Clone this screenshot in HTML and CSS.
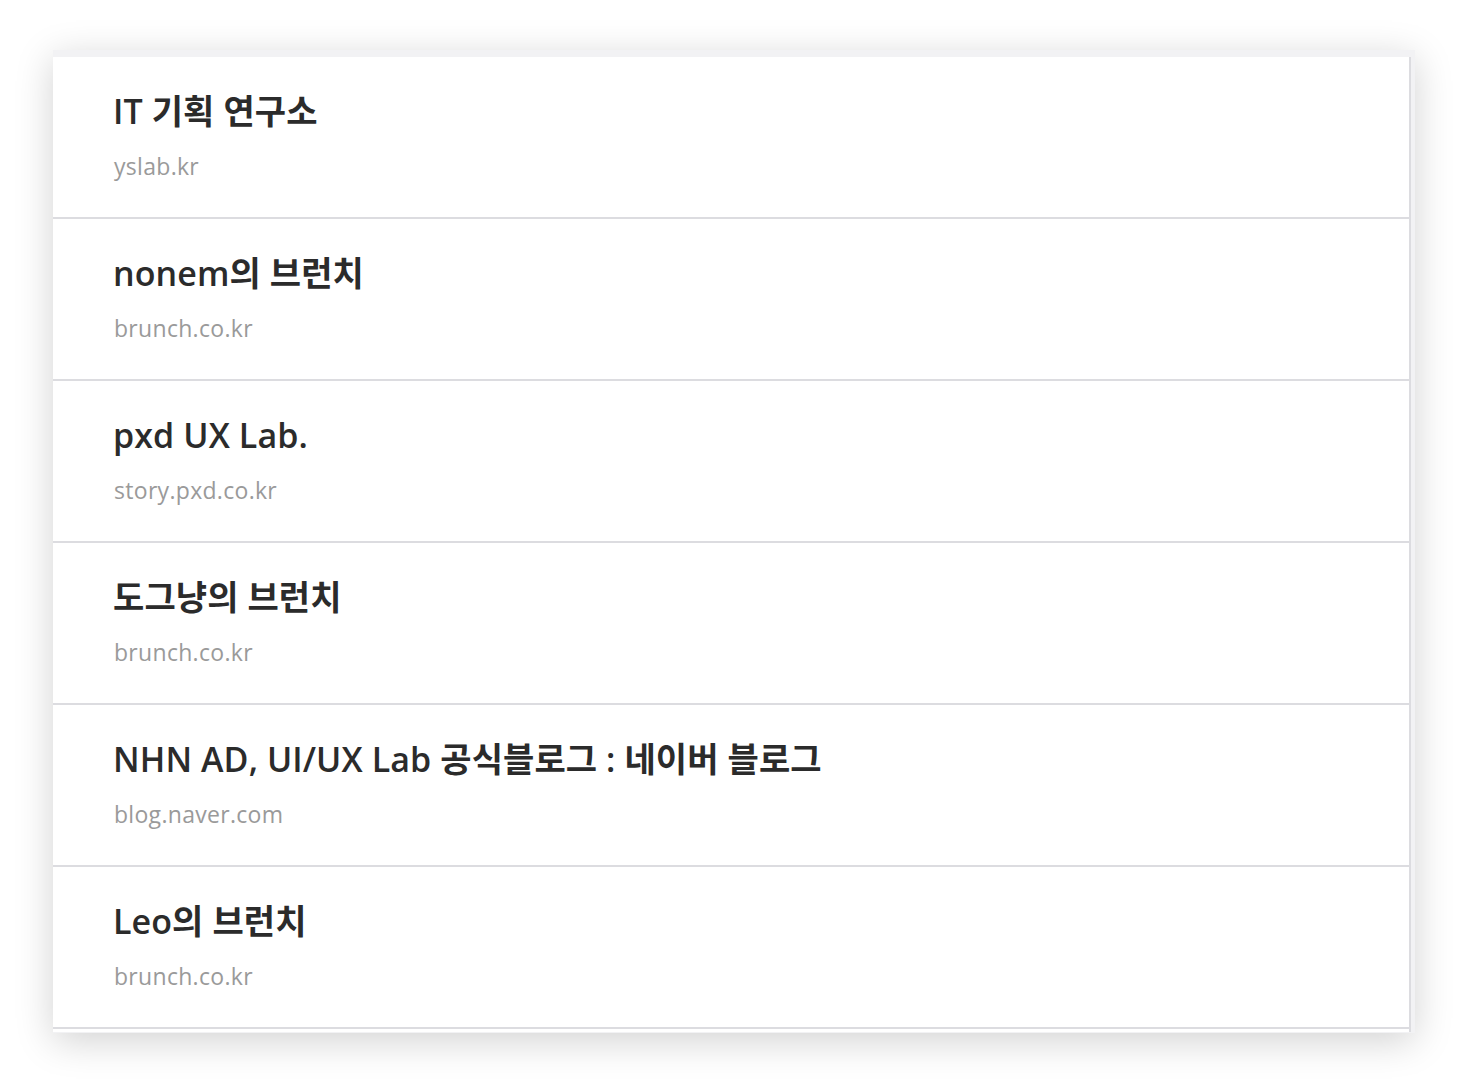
FILE: index.html
```html
<!DOCTYPE html>
<html lang="ko">
<head>
<meta charset="utf-8">
<link rel="stylesheet" href="styles.css">
</head>
<body>
<div class="panel">
  <ul class="list">
    <li class="item"><div class="title">IT 기획 연구소</div><div class="site">yslab.kr</div></li>
    <li class="item"><div class="title">nonem의 브런치</div><div class="site">brunch.co.kr</div></li>
    <li class="item"><div class="title">pxd UX Lab.</div><div class="site">story.pxd.co.kr</div></li>
    <li class="item"><div class="title">도그냥의 브런치</div><div class="site">brunch.co.kr</div></li>
    <li class="item"><div class="title">NHN AD, UI/UX Lab 공식블로그 : 네이버 블로그</div><div class="site">blog.naver.com</div></li>
    <li class="item"><div class="title">Leo의 브런치</div><div class="site">brunch.co.kr</div></li>
  </ul>
</div>
</body>
</html>
```
FILE: styles.css
```css
html, body {
  margin: 0;
  background: #ffffff;
}
body {
  min-height: 1088px;
  box-sizing: border-box;
  padding: 50px 53px 0 53px;
  font-family: "Open Sans", "Noto Sans CJK KR", sans-serif;
}
.panel {
  width: 1362px;
  box-sizing: border-box;
  background: #f2f2f4;
  padding: 7px 4px 1px 0;
  box-shadow: 0 8px 36px rgba(0, 0, 0, 0.18);
}
.list {
  list-style: none;
  margin: 0;
  padding: 0 0 3px 0;
  background: #ffffff;
  border-right: 2px solid #dcdce0;
}
.item {
  box-sizing: border-box;
  border-bottom: 2px solid #dcdce0;
  padding: 33px 0 0 60px;
  height: 162px;
}
.title {
  font-size: 34px;
  font-weight: 600;
  color: #2b2b2b;
  line-height: 42px;
  letter-spacing: 0.1px;
}
.site {
  margin-top: 20px;
  font-size: 23px;
  color: #9a9a9a;
  line-height: 28px;
  letter-spacing: 0.3px;
  padding-left: 1px;
}
```
